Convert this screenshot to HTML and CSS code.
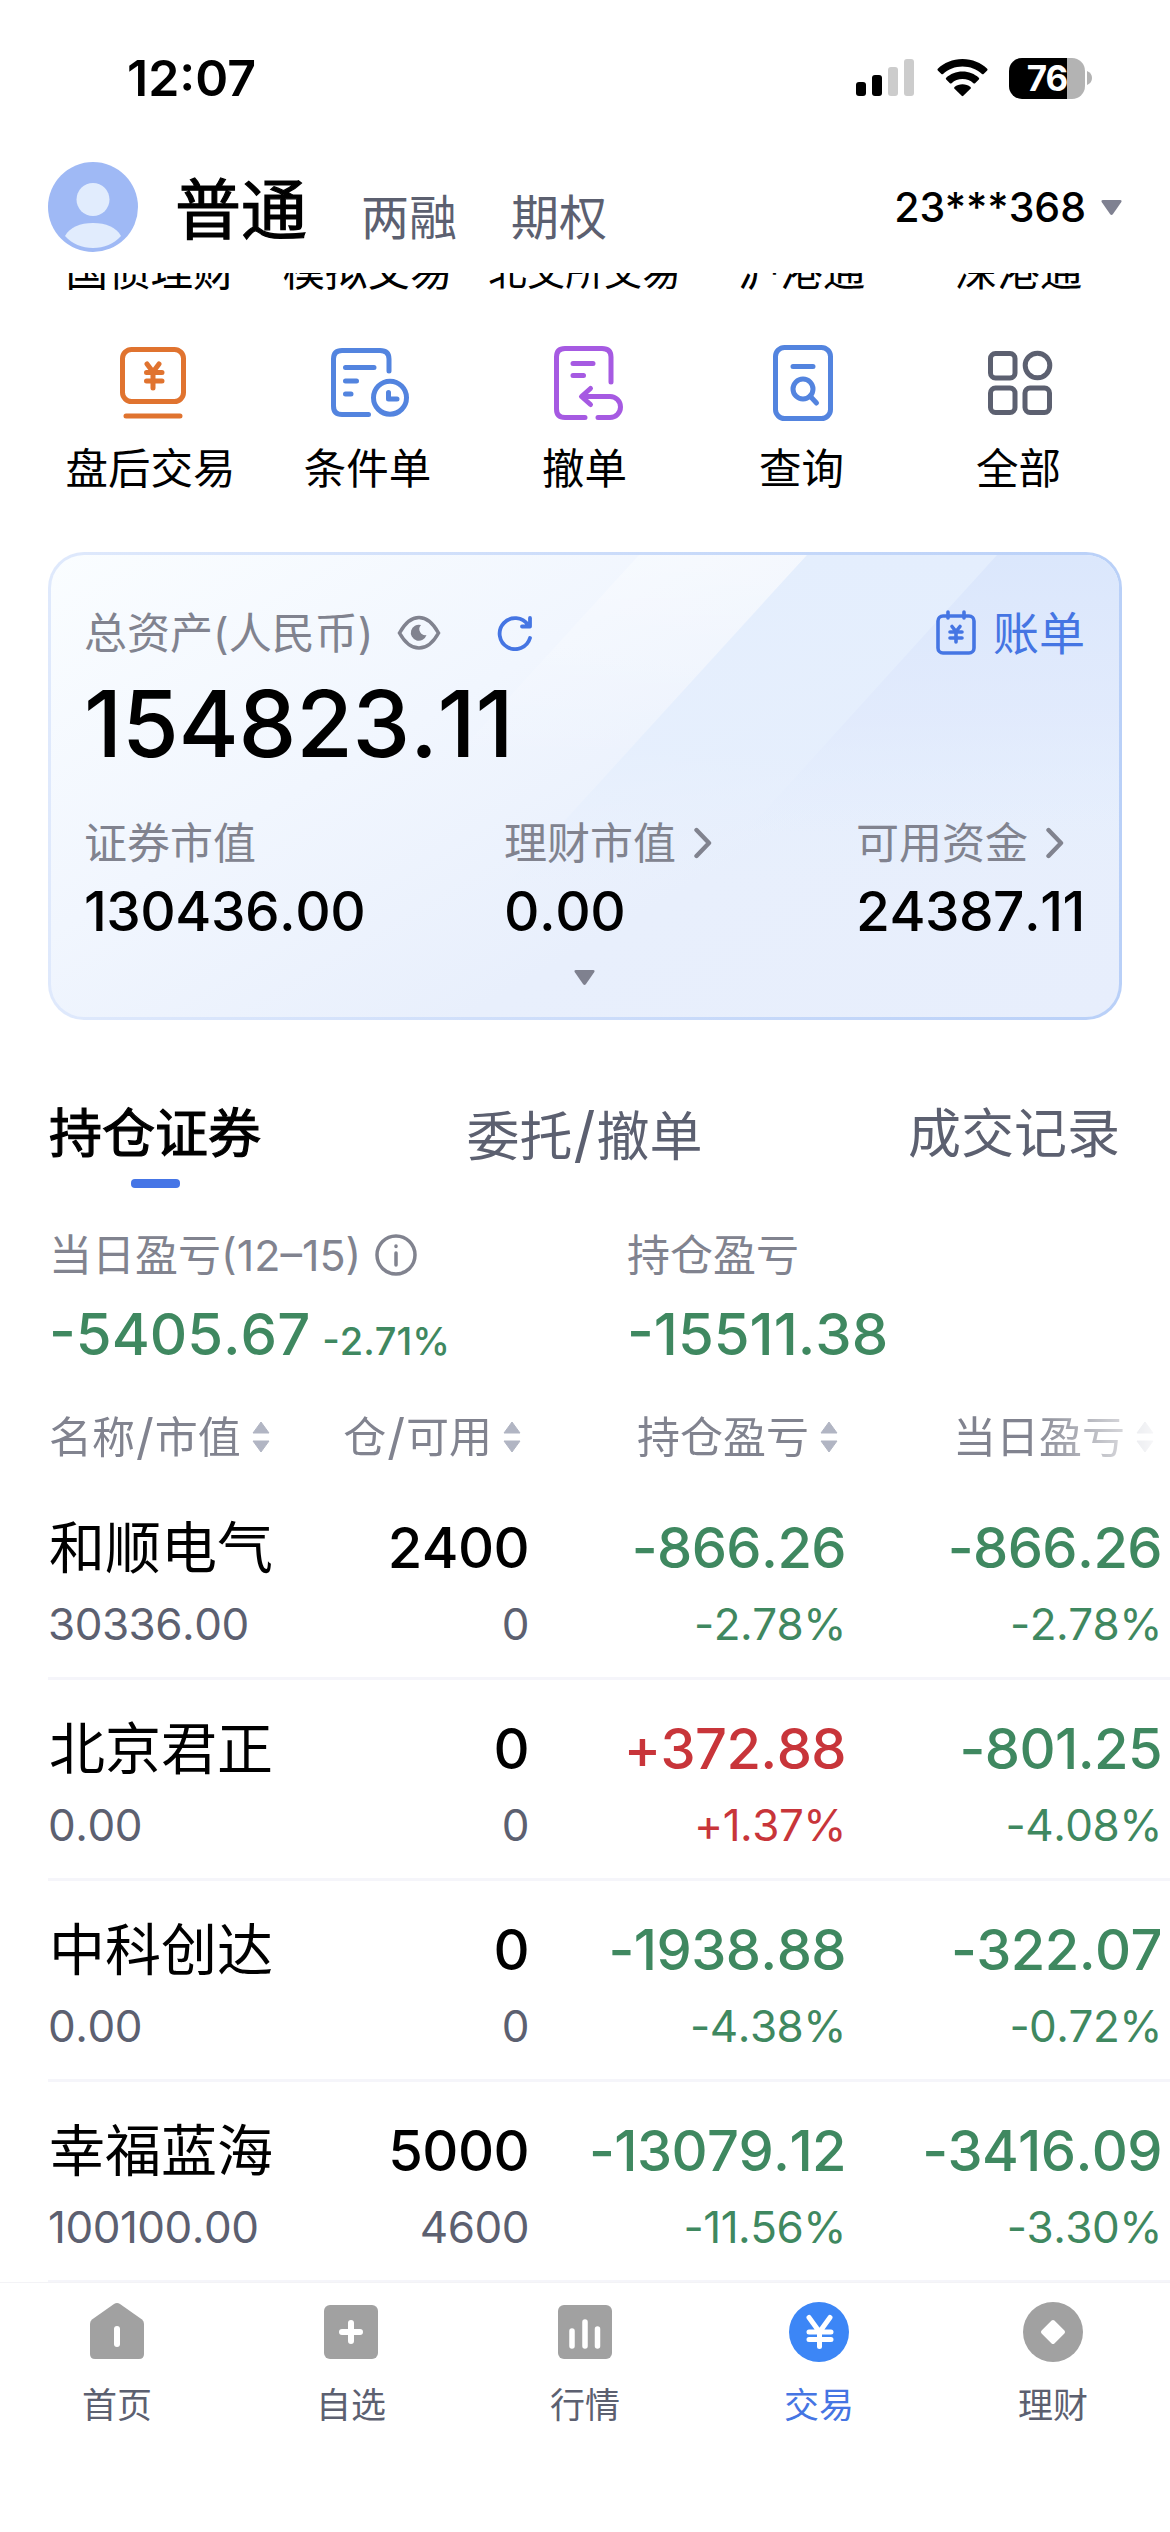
FILE: index.html
```html
<!DOCTYPE html>
<html lang="zh-CN">
<head>
    <meta charset="UTF-8">
    <meta name="viewport" content="width=device-width, initial-scale=1.0">
    <title>交易</title>
    <link rel="stylesheet" href="styles.css">
</head>
<body>
    <div class="status-bar">
        <div class="time">12:07</div>
        <div class="status-icons">
            <svg class="signal" width="58" height="38" viewBox="0 0 58 38">
                <rect x="0" y="23" width="10" height="14" rx="3"/>
                <rect x="16" y="16" width="10" height="21" rx="3"/>
                <rect x="32" y="8" width="10" height="29" rx="3" fill="#ccc"/>
                <rect x="48" y="0" width="10" height="37" rx="3" fill="#ccc"/>
            </svg>
            <svg class="wifi" width="51" height="38" viewBox="0 0 51 38">
                <path d="M25.500 0C35.500 0 44 3.800 50.200 9.700Q51 10.500 50.200 11.400L46.600 15Q45.800 15.700 45 15C39.600 10.200 33 7.500 25.500 7.500S11.400 10.200 6 15Q5.200 15.700 4.400 15L.8 11.400Q0 10.500.8 9.700C7 3.800 15.500 0 25.500 0Z"/>
                <path d="M25.500 12.600C32 12.600 37.600 15 41.800 18.800Q42.700 19.700 41.800 20.600L38.100 24.200Q37.300 24.900 36.400 24.200C33.400 21.600 29.700 20.100 25.500 20.100S17.600 21.600 14.600 24.200Q13.700 24.900 12.900 24.200L9.200 20.600Q8.300 19.700 9.200 18.800C13.400 15 19 12.600 25.500 12.600Z"/>
                <path d="M25.500 25.200C28.500 25.200 31.300 26.200 33.500 28Q34.400 28.900 33.500 29.800L26.300 36.800Q25.500 37.500 24.700 36.800L17.500 29.800Q16.600 28.900 17.500 28C19.700 26.200 22.500 25.200 25.500 25.200Z"/>
            </svg>
            <div class="battery"><span>76</span></div>
            <svg class="battery-nub" width="5" height="14" viewBox="0 0 5 14"><path d="M0 0Q5 2 5 7T0 14Z" fill="#b3b3b3"/></svg>
        </div>
    </div>

    <div class="header">
        <svg class="avatar" width="90" height="90" viewBox="0 0 90 90">
            <circle cx="45" cy="45" r="45" fill="#9fb9f5"/>
            <circle cx="45" cy="37.500" r="16.500" fill="#e1ecfd"/>
            <path d="M17 74C22 65 32 61 45 61S68 65 73 74C66 82 56 86 45 86S24 82 17 74Z" fill="#e1ecfd"/>
        </svg>
        <div class="mode active">普通</div>
        <div class="mode">两融</div>
        <div class="mode">期权</div>
        <div class="account">23***368</div>
        <svg class="account-arrow" width="21" height="15" viewBox="0 0 21 15"><path d="M2 0H19Q21.500 0 20 2.500L12 14Q10.500 15.800 9 14L1 2.500Q-.5 0 2 0Z" fill="#7f8191"/></svg>
    </div>

    <div class="menu-clipped">
        <span>国债理财</span>
        <span>模拟交易</span>
        <span class="small">北交所交易</span>
        <span>沪港通</span>
        <span>深港通</span>
    </div>

    <div class="menu">
        <div class="menu-item">
            <svg width="90" height="90" viewBox="0 0 90 90" stroke="#e0732f">
                <rect x="16.500" y="10.500" width="61" height="52" rx="9"/>
                <path d="M20 77H74M41 25L47 33L53 25M40.500 33.500H56M40.500 42H56M47 33V49"/>
            </svg>
            <span>盘后交易</span>
        </div>
        <div class="menu-item">
            <svg width="90" height="90" viewBox="0 0 90 90" stroke="#5384df">
                <path d="M66 32V20Q66 11.500 57 11.500H19Q10.500 11.500 10.500 20V67Q10.500 75.500 19 75.500H45.500M22.500 28.500H51M22.500 42H33.500M22.500 55H28"/>
                <circle cx="67" cy="58.700" r="16.500"/>
                <path d="M65.500 53.500V60H74"/>
            </svg>
            <span>条件单</span>
        </div>
        <div class="menu-item">
            <svg width="90" height="90" viewBox="0 0 90 90" stroke="#a65ae2">
                <path d="M71 43V18Q71 9.500 62 9.500H25Q16.500 9.500 16.500 18V70Q16.500 78.500 25 78.500H45M33 24.500H53M33 36.500H43.500M50.500 49.500L41.500 57.500L50.500 65.500M42 57.500H70A10.500 10.500 0 0 1 70 78.500H58"/>
            </svg>
            <span>撤单</span>
        </div>
        <div class="menu-item">
            <svg width="90" height="90" viewBox="0 0 90 90" stroke="#5384df">
                <rect x="18.500" y="8.500" width="55" height="71" rx="9"/>
                <path d="M36 27.500H56M53 57L59.500 64"/>
                <circle cx="46" cy="50" r="10"/>
            </svg>
            <span>查询</span>
        </div>
        <div class="menu-item">
            <svg width="90" height="90" viewBox="0 0 90 90" stroke="#5c6070">
                <rect x="16.500" y="14.500" width="24.500" height="24.500" rx="5"/>
                <circle cx="63.500" cy="26.500" r="12.300"/>
                <rect x="16.500" y="49" width="24.500" height="24.500" rx="5"/>
                <rect x="51" y="49" width="24.500" height="24.500" rx="5"/>
            </svg>
            <span>全部</span>
        </div>
    </div>

    <div class="card">
        <svg class="card-bg" width="1068" height="462" viewBox="0 0 1068 462">
            <defs>
                <linearGradient id="shine" x1="0" y1="0" x2="0" y2="1">
                    <stop offset="0" stop-color="#fff" stop-opacity=".35"/>
                    <stop offset=".7" stop-color="#fff" stop-opacity="0"/>
                </linearGradient>
                <linearGradient id="band" x1="0" y1="0" x2="0" y2="1">
                    <stop offset="0" stop-color="#e4eefd"/>
                    <stop offset=".6" stop-color="#e4eefd" stop-opacity=".8"/>
                    <stop offset="1" stop-color="#e5eefd" stop-opacity="0"/>
                </linearGradient>
                <linearGradient id="corner" x1="0" y1="0" x2="0" y2="1">
                    <stop offset="0" stop-color="#dbe7fc"/>
                    <stop offset=".6" stop-color="#e0e9fc" stop-opacity=".7"/>
                    <stop offset="1" stop-color="#e3edfd" stop-opacity="0"/>
                </linearGradient>
            </defs>
            <path d="M588 0H756L482 300H314Z" fill="url(#shine)"/>
            <path d="M756 0H1068V330H455Z" fill="url(#band)"/>
            <path d="M946 0H1068V280H692Z" fill="url(#corner)"/>
        </svg>
        <div class="card-head">
            <span class="label">总资产(人民币)</span>
            <svg class="eye" width="44" height="36" viewBox="0 0 44 36" fill="none" stroke="#81838f" stroke-width="3.600">
                <path d="M2.500 18C8 8 14 2.500 22 2.500S36 8 41.500 18C36 28 30 33 22 33S8 28 2.500 18Z"/>
                <path d="M24 10A8 8 0 1 0 29.500 20A6 6 0 0 1 24 10Z" fill="#81838f" stroke="none"/>
            </svg>
            <svg class="refresh" width="36" height="36" viewBox="0 0 36 36" fill="none" stroke="#4575e3" stroke-width="3.800" stroke-linecap="round" stroke-linejoin="round">
                <path d="M33 23A15.500 15.500 0 1 1 31 10M33 3V11.500H25"/>
            </svg>
            <div class="bill">
                <svg width="40" height="46" viewBox="0 0 40 46" fill="none" stroke="#4575e3" stroke-width="3.600" stroke-linecap="round" stroke-linejoin="round">
                    <rect x="2" y="6" width="36" height="37" rx="5"/>
                    <path d="M12 2V8M28 2V8M16 16.500L20 21.500L24 16.500M14 22H26M14 28H26M20 22V32"/>
                </svg>
                <span>账单</span>
            </div>
        </div>
        <div class="total">154823.11</div>
        <div class="card-cols">
            <div>
                <div class="label">证券市值</div>
                <div class="amount">130436.00</div>
            </div>
            <div>
                <div class="label">理财市值<svg class="chevron" width="18" height="32" viewBox="0 0 18 32"><path d="M2.500 3L15 16L2.500 29"/></svg></div>
                <div class="amount">0.00</div>
            </div>
            <div>
                <div class="label">可用资金<svg class="chevron" width="18" height="32" viewBox="0 0 18 32"><path d="M2.500 3L15 16L2.500 29"/></svg></div>
                <div class="amount">24387.11</div>
            </div>
        </div>
        <svg class="expand" width="21" height="15" viewBox="0 0 21 15"><path d="M2 0H19Q21.500 0 20 2.500L12 14Q10.500 15.800 9 14L1 2.500Q-.5 0 2 0Z" fill="#7f818f"/></svg>
    </div>

    <div class="tabs">
        <div class="tab active">持仓证券</div>
        <div class="tab">委托<i>/</i>撤单</div>
        <div class="tab">成交记录</div>
    </div>

    <div class="summary">
        <div>
            <div class="label">当日盈亏(12–15)
                <svg class="info" width="42" height="42" viewBox="0 0 42 42" fill="none" stroke="#81838f" stroke-width="3.500" stroke-linecap="round"><circle cx="21" cy="21" r="19"/><path d="M21 19V31M21 12V12.500"/></svg>
            </div>
            <div class="profit down">-5405.67<small>-2.71%</small></div>
        </div>
        <div>
            <div class="label">持仓盈亏</div>
            <div class="profit down">-15511.38</div>
        </div>
    </div>

    <div class="holdings">
        <div class="row head">
            <div class="cell">名称<i>/</i>市值<svg class="sort" width="18" height="32" viewBox="0 0 18 32"><path d="M9 1L17 12H1ZM9 31L1 20H17Z"/></svg></div>
            <div class="cell">仓<i>/</i>可用<svg class="sort" width="18" height="32" viewBox="0 0 18 32"><path d="M9 1L17 12H1ZM9 31L1 20H17Z"/></svg></div>
            <div class="cell">持仓盈亏<svg class="sort" width="18" height="32" viewBox="0 0 18 32"><path d="M9 1L17 12H1ZM9 31L1 20H17Z"/></svg></div>
            <div class="cell">当日盈亏<svg class="sort" width="18" height="32" viewBox="0 0 18 32"><path d="M9 1L17 12H1ZM9 31L1 20H17Z"/></svg></div>
        </div>
        <div class="row">
            <div class="cell"><b>和顺电气</b><span>30336.00</span></div>
            <div class="cell"><b>2400</b><span>0</span></div>
            <div class="cell down"><b>-866.26</b><span>-2.78%</span></div>
            <div class="cell down"><b>-866.26</b><span>-2.78%</span></div>
        </div>
        <div class="row">
            <div class="cell"><b>北京君正</b><span>0.00</span></div>
            <div class="cell"><b>0</b><span>0</span></div>
            <div class="cell up"><b>+372.88</b><span>+1.37%</span></div>
            <div class="cell down"><b>-801.25</b><span>-4.08%</span></div>
        </div>
        <div class="row">
            <div class="cell"><b>中科创达</b><span>0.00</span></div>
            <div class="cell"><b>0</b><span>0</span></div>
            <div class="cell down"><b>-1938.88</b><span>-4.38%</span></div>
            <div class="cell down"><b>-322.07</b><span>-0.72%</span></div>
        </div>
        <div class="row">
            <div class="cell"><b>幸福蓝海</b><span>100100.00</span></div>
            <div class="cell"><b>5000</b><span>4600</span></div>
            <div class="cell down"><b>-13079.12</b><span>-11.56%</span></div>
            <div class="cell down"><b>-3416.09</b><span>-3.30%</span></div>
        </div>
    </div>

    <div class="tabbar">
        <div class="tabbar-item">
            <svg width="60" height="60" viewBox="0 0 60 60">
                <path d="M27 2Q30 0 33 2L55 17.500Q57 19 57 22V52Q57 57 52 57H8Q3 57 3 52V22Q3 19 5 17.500Z" fill="#a1a1a1"/>
                <path d="M30 27V42" stroke="#fff" stroke-width="6" stroke-linecap="round"/>
            </svg>
            <span>首页</span>
        </div>
        <div class="tabbar-item">
            <svg width="60" height="60" viewBox="0 0 60 60">
                <rect x="3" y="3" width="54" height="54" rx="6" fill="#a1a1a1"/>
                <path d="M30 21V39M21 30H39" stroke="#fff" stroke-width="6" stroke-linecap="round"/>
            </svg>
            <span>自选</span>
        </div>
        <div class="tabbar-item">
            <svg width="60" height="60" viewBox="0 0 60 60">
                <rect x="3" y="3" width="54" height="54" rx="6" fill="#a1a1a1"/>
                <path d="M17 29V44M30 20V44M42.500 27V44" stroke="#fff" stroke-width="5.500" stroke-linecap="round"/>
            </svg>
            <span>行情</span>
        </div>
        <div class="tabbar-item active">
            <svg width="60" height="60" viewBox="0 0 60 60">
                <circle cx="30" cy="30" r="30" fill="#3c86f6"/>
                <path d="M20 15.500L30.500 30L41 15.500M20 30H42M20 37.500H42M30.500 30V44.500" fill="none" stroke="#fff" stroke-width="5" stroke-linecap="round" stroke-linejoin="round"/>
            </svg>
            <span>交易</span>
        </div>
        <div class="tabbar-item">
            <svg width="60" height="60" viewBox="0 0 60 60">
                <circle cx="30" cy="30" r="30" fill="#a1a1a1"/>
                <path d="M30 20L40 30L30 40L20 30Z" fill="#fff" stroke="#fff" stroke-width="4" stroke-linejoin="round"/>
            </svg>
            <span>理财</span>
        </div>
    </div>
</body>
</html>
```
FILE: styles.css
```css
* {
    box-sizing: border-box;
}
body {
    margin: 0;
    width: 1170px;
    height: 2532px;
    overflow: hidden;
    background-color: #fff;
    color: #000;
    font-family: Inter, "Noto Sans CJK SC", sans-serif;
}
svg {
    display: block;
    flex-shrink: 0;
}
i {
    margin: 0 1px;
    font-size: 1.15em;
    font-style: normal;
}

/* status bar */
.status-bar {
    display: flex;
    justify-content: space-between;
    align-items: center;
    height: 156px;
    padding: 0 78px 0 127px;
}
.time {
    font-size: 50px;
    font-weight: 600;
}
.status-icons {
    display: flex;
    align-items: center;
}
.wifi {
    margin: 0 21px 0 23px;
}
.battery {
    display: flex;
    align-items: center;
    justify-content: center;
    width: 76px;
    height: 41px;
    border-radius: 13px;
    background: linear-gradient(to right, #000 76%, #b3b3b3 76%);
    color: #fff;
    font-size: 35px;
    font-weight: 700;
    letter-spacing: -1px;
}
.battery-nub {
    margin-left: 2px;
}

/* header */
.header {
    display: flex;
    align-items: center;
    height: 117px;
    padding: 0 48px 15px;
}
.mode {
    margin: 22px 54px 0 0;
    line-height: 60px;
    font-size: 48px;
    color: #5c6070;
}
.mode.active {
    margin: 5px 54px 0 37px;
    font-size: 66px;
    color: #000;
    -webkit-text-stroke: 1.2px #000;
}
.account {
    margin-left: auto;
    font-size: 41px;
    font-weight: 500;
}
.account-arrow {
    margin-left: 15px;
}

/* menu */
.menu-clipped, .menu {
    display: grid;
    grid-template-columns: repeat(5, 217px);
    padding-left: 42px;
    font-size: 42.5px;
    text-align: center;
}
.menu-clipped {
    height: 29px;
    margin-bottom: 37px;
    overflow: hidden;
    align-content: end;
    line-height: 62px;
}
.menu-clipped span {
    white-space: nowrap;
}
.menu-clipped .small {
    font-size: 38.5px;
}
.menu-item {
    display: flex;
    flex-direction: column;
    align-items: center;
    gap: 10px;
    line-height: 60px;
}
.menu-item svg {
    fill: none;
    stroke-width: 5;
    stroke-linecap: round;
    stroke-linejoin: round;
}

/* asset card */
.card {
    position: relative;
    width: 1074px;
    height: 468px;
    margin: 53px 48px 0;
    padding: 48px 34px 0 33px;
    border: 3px solid transparent;
    border-radius: 36px;
    overflow: hidden;
    background: linear-gradient(150deg, #fafdff 0%, #f1f6fe 35%, #e8effc 65%, #e7eefc 100%) padding-box,
        linear-gradient(to right, #dfe9fc, #b9d0f8) border-box;
}
.card-bg {
    position: absolute;
    left: 0;
    top: 0;
}
.card-head, .total, .card-cols, .expand {
    position: relative;
}
.card-head {
    display: flex;
    align-items: center;
    height: 60px;
}
.label {
    display: flex;
    align-items: center;
    line-height: 60px;
    font-size: 43px;
    color: #81838f;
    white-space: nowrap;
}
.eye {
    margin-left: 24px;
}
.refresh {
    margin-left: 56px;
}
.bill {
    display: flex;
    align-items: center;
    gap: 17px;
    margin-left: auto;
    line-height: 60px;
    font-size: 46px;
    color: #4575e3;
}
.total {
    margin-top: 11px;
    line-height: 100px;
    font-size: 92px;
    font-weight: 500;
    font-kerning: none;
    letter-spacing: -.3px;
}
.card-cols {
    display: grid;
    grid-template-columns: 420px 352px auto;
    margin-top: 39px;
}
.chevron {
    margin-left: 18px;
    fill: none;
    stroke: #81838f;
    stroke-width: 4.4;
    stroke-linecap: round;
    stroke-linejoin: round;
}
.amount {
    margin-top: 8px;
    line-height: 60px;
    font-size: 55px;
    font-weight: 500;
    font-kerning: none;
    letter-spacing: -.5px;
}
.expand {
    margin: 29px auto 0;
}

/* tabs */
.tabs {
    display: flex;
    justify-content: space-between;
    height: 168px;
    padding: 84px 50px 0 49px;
    line-height: 60px;
    font-size: 53px;
    color: #5c6070;
}
.tab.active {
    color: #000;
    -webkit-text-stroke: 1.2px #000;
}
.tab.active::after {
    content: "";
    display: block;
    width: 49px;
    height: 9px;
    margin: 15px auto 0;
    border-radius: 4px;
    background-color: #4575e6;
}

/* profit summary */
.summary {
    display: grid;
    grid-template-columns: 578px auto;
    padding: 37px 0 0 49px;
}
.info {
    margin-left: 14px;
}
.profit {
    margin-top: 19px;
    line-height: 60px;
    font-size: 58px;
    font-weight: 500;
    font-kerning: none;
}
.profit small {
    margin-left: 12px;
    font-size: 38px;
}
.up {
    color: #c8353a;
}
.down {
    color: #3f8860;
}

/* holdings table */
.holdings {
    margin-top: 36px;
}
.row {
    display: grid;
    grid-template-columns: 251px 230px 317px 316px;
    height: 201px;
    margin-left: 48px;
    padding-top: 34px;
    border-bottom: 3px solid #f5f5fa;
}
.row.head {
    height: 72px;
    padding-top: 0;
    border: none;
    line-height: 60px;
    font-size: 43px;
    color: #81838f;
    -webkit-mask-image: linear-gradient(to right, #000 980px, transparent 1122px);
    mask-image: linear-gradient(to right, #000 980px, transparent 1122px);
}
.head .cell {
    display: flex;
    align-items: center;
    justify-content: flex-end;
    height: 60px;
    padding-right: 8px;
}
.head .cell:first-child {
    justify-content: flex-start;
    padding-left: 1px;
}
.sort {
    margin-left: 11px;
    fill: #b1b5c3;
    stroke: #b1b5c3;
    stroke-linejoin: round;
}
.cell {
    text-align: right;
    white-space: nowrap;
}
.cell:first-child {
    text-align: left;
}
.cell b {
    display: block;
    line-height: 70px;
    font-size: 56px;
    font-weight: 500;
    font-kerning: none;
    letter-spacing: -.6px;
}
.cell:first-child b {
    font-weight: 400;
    letter-spacing: 0;
    margin-left: 1px;
}
.cell span {
    display: block;
    margin-top: 16px;
    line-height: 50px;
    font-size: 44px;
    font-kerning: none;
    letter-spacing: -.5px;
    color: #5c6070;
}
.up span, .down span {
    color: inherit;
}

/* bottom bar */
.tabbar {
    display: grid;
    grid-template-columns: repeat(5, 1fr);
    height: 250px;
    margin-top: -1px;
    padding-top: 19px;
    border-top: 1px solid #f3f3f6;
    font-size: 35px;
    color: #5c6070;
}
.tabbar-item {
    display: flex;
    flex-direction: column;
    align-items: center;
    line-height: 50px;
    gap: 18px;
}
.tabbar-item.active {
    color: #4575e3;
}
```
